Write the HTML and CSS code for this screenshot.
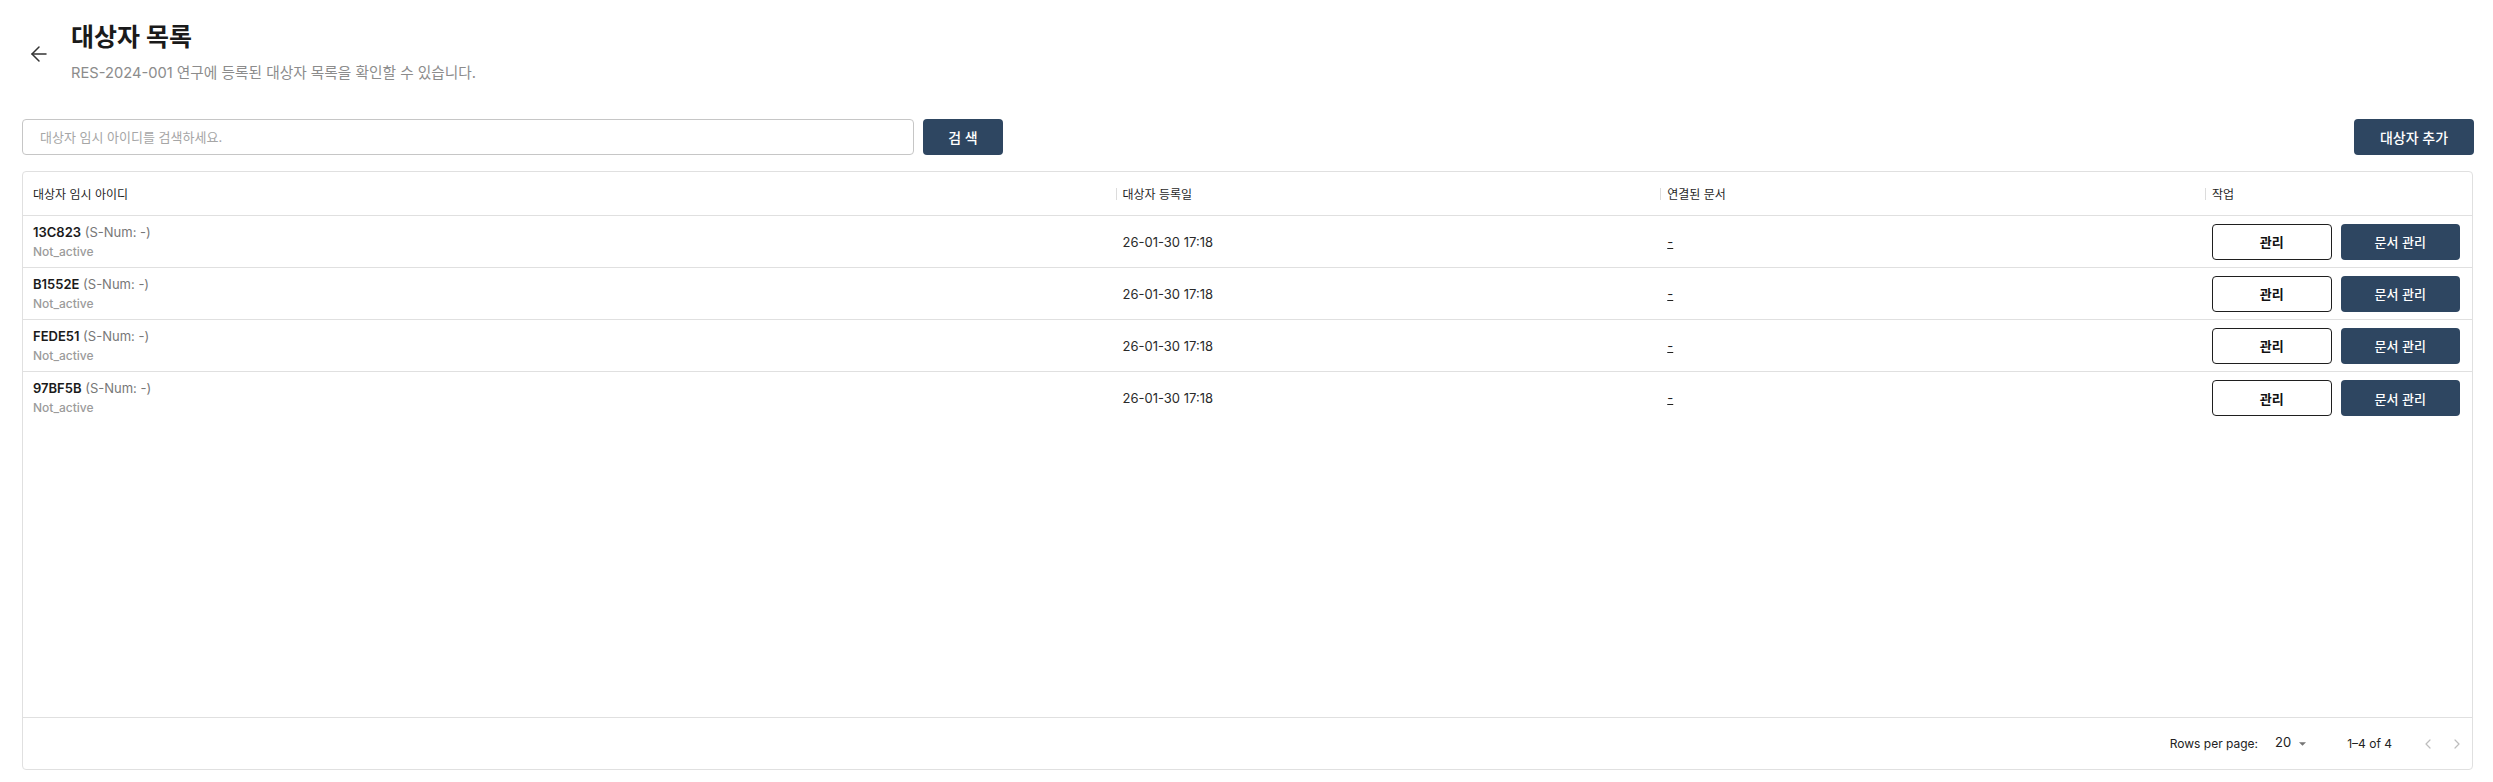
FILE: index.html
```html
<!DOCTYPE html>
<html lang="ko">
<head>
<meta charset="utf-8">
<title>대상자 목록</title>
<link rel="stylesheet" href="styles.css">
</head>
<body>
<div class="page">
  <header class="page-header">
    <button class="back-btn" type="button" aria-label="뒤로">
      <svg viewBox="0 0 24 24" width="24" height="24" fill="none" stroke="currentColor" stroke-width="1.5" stroke-linecap="round" stroke-linejoin="round"><path d="M12 19l-7-7 7-7"/><path d="M19 12H5"/></svg>
    </button>
    <div class="title-block">
      <h1 class="title">대상자 목록</h1>
      <p class="subtitle">RES-2024-001 연구에 등록된 대상자 목록을 확인할 수 있습니다.</p>
    </div>
  </header>

  <div class="toolbar">
    <div class="search-group">
      <input class="search-input" type="text" placeholder="대상자 임시 아이디를 검색하세요.">
      <button class="btn btn-primary btn-search" type="button">검 색</button>
    </div>
    <button class="btn btn-primary btn-add" type="button">대상자 추가</button>
  </div>

  <div class="grid">
    <div class="grid-row grid-head">
      <div class="cell head-cell">대상자 임시 아이디</div>
      <div class="cell head-cell sep">대상자 등록일</div>
      <div class="cell head-cell sep">연결된 문서</div>
      <div class="cell head-cell sep">작업</div>
    </div>
    <div class="grid-body">
      <div class="grid-row data-row">
        <div class="cell id-cell"><div class="id-line"><b>13C823</b> <span class="snum">(S-Num: -)</span></div><div class="status">Not_active</div></div>
        <div class="cell">26-01-30 17:18</div>
        <div class="cell"><span class="doc-link">-</span></div>
        <div class="cell actions"><button class="btn btn-outline" type="button">관리</button><button class="btn btn-primary btn-doc" type="button">문서 관리</button></div>
      </div>
      <div class="grid-row data-row">
        <div class="cell id-cell"><div class="id-line"><b>B1552E</b> <span class="snum">(S-Num: -)</span></div><div class="status">Not_active</div></div>
        <div class="cell">26-01-30 17:18</div>
        <div class="cell"><span class="doc-link">-</span></div>
        <div class="cell actions"><button class="btn btn-outline" type="button">관리</button><button class="btn btn-primary btn-doc" type="button">문서 관리</button></div>
      </div>
      <div class="grid-row data-row">
        <div class="cell id-cell"><div class="id-line"><b>FEDE51</b> <span class="snum">(S-Num: -)</span></div><div class="status">Not_active</div></div>
        <div class="cell">26-01-30 17:18</div>
        <div class="cell"><span class="doc-link">-</span></div>
        <div class="cell actions"><button class="btn btn-outline" type="button">관리</button><button class="btn btn-primary btn-doc" type="button">문서 관리</button></div>
      </div>
      <div class="grid-row data-row last">
        <div class="cell id-cell"><div class="id-line"><b>97BF5B</b> <span class="snum">(S-Num: -)</span></div><div class="status">Not_active</div></div>
        <div class="cell">26-01-30 17:18</div>
        <div class="cell"><span class="doc-link">-</span></div>
        <div class="cell actions"><button class="btn btn-outline" type="button">관리</button><button class="btn btn-primary btn-doc" type="button">문서 관리</button></div>
      </div>
    </div>
    <div class="grid-footer">
      <span class="rpp-label">Rows per page:</span>
      <span class="rpp-select">20<svg class="caret" viewBox="0 0 10 5" width="10" height="5"><path d="M0 0h10L5 5z" fill="currentColor"/></svg></span>
      <span class="range">1–4 of 4</span>
      <span class="pager">
        <svg viewBox="0 0 16 16" width="24" height="16" fill="none" stroke="currentColor" stroke-width="1.2" stroke-linecap="round" stroke-linejoin="round"><path d="M10 4L6 8l4 4"/></svg>
        <svg viewBox="0 0 16 16" width="24" height="16" fill="none" stroke="currentColor" stroke-width="1.2" stroke-linecap="round" stroke-linejoin="round"><path d="M6 4l4 4-4 4"/></svg>
      </span>
    </div>
  </div>
</div>
</body>
</html>
```

FILE: styles.css
```css
* { box-sizing: border-box; }
html, body { margin: 0; padding: 0; background: #fff; }
body {
  font-family: Inter, "Noto Sans CJK KR", "Noto Sans", sans-serif;
  color: #1f1f1f;
  overflow: hidden;
}
.page {
  padding: 21px 19px 0 22px;
}
.page-header {
  display: flex;
  align-items: flex-start;
}
.back-btn {
  width: 24px;
  height: 24px;
  padding: 0;
  margin: 21px 20px 0 5px;
  border: 0;
  background: none;
  color: #333;
  display: flex;
  cursor: pointer;
}
.title {
  margin: 0;
  font-size: 25px;
  line-height: 32px;
  font-weight: 700;
  color: #1a1a1a;
}
.subtitle {
  margin: 10px 0 0;
  font-size: 14.7px;
  line-height: 20px;
  color: #8c8c8c;
}
.toolbar {
  margin-top: 36px;
  display: flex;
  justify-content: space-between;
  align-items: center;
}
.search-group {
  display: flex;
  gap: 9px;
}
.search-input {
  width: 892px;
  height: 36px;
  border: 1px solid #c6c6c6;
  border-radius: 4px;
  padding: 0 17px;
  font-family: inherit;
  font-size: 13px;
  color: #222;
  outline: none;
}
.search-input::placeholder { color: #a6a6a6; }
.btn {
  height: 36px;
  border-radius: 4px;
  font-family: inherit;
  cursor: pointer;
  padding: 0;
}
.btn-primary {
  background: #2e4661;
  border: 0;
  color: #fff;
}
.btn-search { width: 80px; font-size: 14px; font-weight: 500; }
.btn-add { width: 120px; font-size: 14px; font-weight: 500; }
.grid {
  margin-top: 16px;
  margin-right: 1px;
  height: 599px;
  border: 1px solid #e0e0e0;
  border-radius: 4px;
  display: flex;
  flex-direction: column;
}
.grid-row {
  display: grid;
  grid-template-columns: 2fr 1fr 1fr 270px;
}
.grid-head {
  height: 44px;
  border-bottom: 1px solid #e0e0e0;
}
.cell {
  display: flex;
  align-items: center;
  padding: 0 10px;
  font-size: 13px;
  color: #2a2a2a;
  min-width: 0;
}
.head-cell {
  position: relative;
  font-size: 12px;
  font-weight: 400;
  color: #1f1f1f;
}
.head-cell.sep::before {
  content: "";
  position: absolute;
  left: 3px;
  top: 50%;
  width: 1px;
  height: 12px;
  margin-top: -6px;
  background: #dcdcdc;
}
.grid-body { flex: 1; }
.data-row {
  height: 52px;
  border-bottom: 1px solid #e0e0e0;
}
.data-row.last { border-bottom: 0; }
.id-cell {
  flex-direction: column;
  align-items: flex-start;
  justify-content: center;
}
.id-line {
  font-size: 13px;
  line-height: 19px;
  color: #1a1a1a;
}
.id-line b { font-weight: 600; }
.snum { color: #777; }
.status {
  font-size: 12px;
  line-height: 19px;
  font-weight: 500;
  color: #9b9b9b;
}
.doc-link {
  text-decoration: underline;
  color: #222;
}
.actions {
  gap: 9px;
  padding: 0 12px 0 10px;
}
.btn-outline {
  width: 120px;
  background: #fff;
  border: 1px solid #1f1f1f;
  color: #111;
  font-size: 13px;
  font-weight: 700;
}
.btn-doc {
  width: 120px;
  font-size: 13px;
  font-weight: 500;
}
.grid-footer {
  height: 52px;
  border-top: 1px solid #e0e0e0;
  display: flex;
  justify-content: flex-end;
  align-items: center;
  padding-right: 3px;
  font-size: 12px;
  color: #222;
}
.rpp-label { margin-right: 17px; }
.rpp-select {
  display: flex;
  align-items: center;
  font-size: 13px;
  margin-top: -4px;
  margin-right: 41px;
}
.caret {
  color: #757575;
  margin-left: 8px;
  width: 7px;
  height: 4px;
  margin-top: 4px;
}
.range { margin-right: 24px; }
.pager {
  display: flex;
  gap: 5px;
  color: #bdbdbd;
}
```
